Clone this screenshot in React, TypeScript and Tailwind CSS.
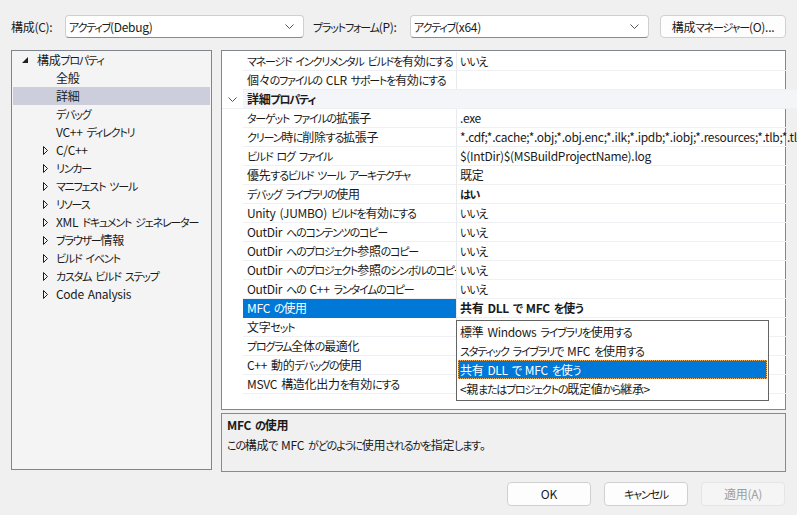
import React from "react";

const FONT = "[font-family:'Noto_Sans_CJK_JP',sans-serif] [font-feature-settings:'palt']";

// kana in the reference UI font are narrower than in Noto, so tighten them
function J({ t }: { t: string }) {
  const parts = t.split(/([\u3040-\u30ff]+| )/).filter((p) => p !== "");
  return (
    <span className="whitespace-nowrap">
      {parts.map((p, i) =>
        p === " " ? (
          <span key={i} className="inline-block w-[4px]">
            {" "}
          </span>
        ) : /[\u3040-\u30ff]/.test(p) ? (
          <span key={i} className="text-[11px] tracking-[-1.2px]">
            {p}
          </span>
        ) : (
          <span key={i} className="tracking-[-0.3px]">
            {p}
          </span>
        )
      )}
    </span>
  );
}

type Row = { name: string; value?: string; bold?: boolean; header?: boolean; selected?: boolean };

const rows: Row[] = [
  { name: "マネージド インクリメンタル ビルドを有効にする", value: "いいえ" },
  { name: "個々のファイルの CLR サポートを有効にする", value: "" },
  { name: "詳細プロパティ", header: true },
  { name: "ターゲット ファイルの拡張子", value: ".exe" },
  { name: "クリーン時に削除する拡張子", value: "*.cdf;*.cache;*.obj;*.obj.enc;*.ilk;*.ipdb;*.iobj;*.resources;*.tlb;*.tli;*.tlh;*.tmp;*.rsp" },
  { name: "ビルド ログ ファイル", value: "$(IntDir)$(MSBuildProjectName).log" },
  { name: "優先するビルド ツール アーキテクチャ", value: "既定" },
  { name: "デバッグ ライブラリの使用", value: "はい", bold: true },
  { name: "Unity (JUMBO) ビルドを有効にする", value: "いいえ" },
  { name: "OutDir へのコンテンツのコピー", value: "いいえ" },
  { name: "OutDir へのプロジェクト参照のコピー", value: "いいえ" },
  { name: "OutDir へのプロジェクト参照のシンボルのコピー", value: "いいえ" },
  { name: "OutDir への C++ ランタイムのコピー", value: "いいえ" },
  { name: "MFC の使用", value: "共有 DLL で MFC を使う", bold: true, selected: true },
  { name: "文字セット", value: "" },
  { name: "プログラム全体の最適化", value: "" },
  { name: "C++ 動的デバッグの使用", value: "" },
  { name: "MSVC 構造化出力を有効にする", value: "" },
];

const treeItems: { label: string; level: 0 | 1; expand?: "open" | "closed"; selected?: boolean }[] = [
  { label: "構成プロパティ", level: 0, expand: "open" },
  { label: "全般", level: 1 },
  { label: "詳細", level: 1, selected: true },
  { label: "デバッグ", level: 1 },
  { label: "VC++ ディレクトリ", level: 1 },
  { label: "C/C++", level: 1, expand: "closed" },
  { label: "リンカー", level: 1, expand: "closed" },
  { label: "マニフェスト ツール", level: 1, expand: "closed" },
  { label: "リソース", level: 1, expand: "closed" },
  { label: "XML ドキュメント ジェネレーター", level: 1, expand: "closed" },
  { label: "ブラウザー情報", level: 1, expand: "closed" },
  { label: "ビルド イベント", level: 1, expand: "closed" },
  { label: "カスタム ビルド ステップ", level: 1, expand: "closed" },
  { label: "Code Analysis", level: 1, expand: "closed" },
];

const dropItems = [
  "標準 Windows ライブラリを使用する",
  "スタティック ライブラリで MFC を使用する",
  "共有 DLL で MFC を使う",
  "<親またはプロジェクトの既定値から継承>",
];

function Chevron() {
  return (
    <svg width="9" height="5" viewBox="0 0 9 5">
      <path d="M0.5 0.5 L4.5 4.5 L8.5 0.5" fill="none" stroke="#555" strokeWidth="1" />
    </svg>
  );
}

function Combo({ text, width }: { text: string; width: string }) {
  return (
    <div className={`${width} h-[23px] bg-white border border-[#cfcfcf] border-b-[#8a8a8a] rounded-[4px] flex items-center pl-[3px] pr-[9px]`}>
      <span className="flex-1">
        <J t={text} />
      </span>
      <Chevron />
    </div>
  );
}

function TreeArrow({ kind }: { kind: "open" | "closed" }) {
  if (kind === "open") {
    return (
      <svg width="6" height="6" viewBox="0 0 6 6">
        <path d="M6 0 L6 6 L0 6 Z" fill="#1e1e1e" />
      </svg>
    );
  }
  return (
    <svg width="5" height="9" viewBox="0 0 5 9">
      <path d="M0.5 0.5 L4.5 4.5 L0.5 8.5 Z" fill="none" stroke="#1e1e1e" strokeWidth="1" />
    </svg>
  );
}

export default function App() {
  return (
    <div className={`w-[797px] h-[515px] bg-[#f0f0f0] overflow-hidden text-[12px] text-[#1a1a1a] ${FONT}`}>
      {/* top bar */}
      <div className="flex items-center h-[23px] mt-[15px] pl-[11px]">
        <span className="w-[54px]">
          <J t="構成(C):" />
        </span>
        <Combo text="アクティブ(Debug)" width="w-[239px]" />
        <span className="w-[97px] ml-[9px]">
          <J t="プラットフォーム(P):" />
        </span>
        <Combo text="アクティブ(x64)" width="w-[239px]" />
        <div className="ml-[11px] w-[126px] h-[23px] bg-[#fdfdfd] border border-[#d0d0d0] rounded-[4px] flex items-center justify-center">
          <J t="構成マネージャー(O)..." />
        </div>
      </div>

      {/* main */}
      <div className="flex mt-[12px] pl-[11px]">
        {/* tree */}
        <div className="w-[201px] h-[420px] bg-[#f4f4f4] border border-[#80848c] px-[1px]">
          {treeItems.map((t) => (
            <div key={t.label} className={`h-[18px] flex items-center ${t.selected ? "bg-[#cccedb]" : ""}`}>
              <div className={`flex items-center justify-center w-[8px] ${t.level === 0 ? "ml-[8px]" : "ml-[28px]"}`}>
                {t.expand && <TreeArrow kind={t.expand} />}
              </div>
              <span className={t.level === 0 ? "ml-[8px]" : "ml-[7px]"}>
                <J t={t.label} />
              </span>
            </div>
          ))}
        </div>

        {/* right column */}
        <div className="ml-[9px] flex flex-col">
          <div className="relative w-[565px] h-[360px] bg-white border border-[#82868e] flex">
            <div className="flex-1 pt-[1px]">
              {rows.map((r) =>
                r.header ? (
                  <div key={r.name} className="h-[19px] flex items-center border-b border-[#eef0f4]">
                    <div className="w-[21px] flex justify-center">
                      <Chevron />
                    </div>
                    <div className="flex-1 h-full bg-[#f3f5f8] flex items-center pl-[4px] font-bold">
                      <J t={r.name} />
                    </div>
                  </div>
                ) : (
                  <div key={r.name} className="h-[19px] flex">
                    <div className="w-[21px]" />
                    <div
                      className={`w-[213px] h-full pl-[4px] flex items-center overflow-hidden border-b ${
                        r.selected ? "bg-[#0078d7] text-white border-[#0078d7]" : "border-[#eef0f4]"
                      }`}
                    >
                      <J t={r.name} />
                    </div>
                    <div
                      className={`flex-1 min-w-0 h-full border-l border-[#e8eaee] pl-[3px] pr-[2px] flex items-center overflow-hidden border-b border-b-[#eef0f4] ${
                        r.bold ? "font-bold" : ""
                      }`}
                    >
                      <span className="flex-1 min-w-0 overflow-hidden">
                        <J t={r.value ?? ""} />
                      </span>
                      {r.selected && (
                        <div className="w-[16px] h-[16px] border border-[#9a9a9a] bg-white flex items-center justify-center">
                          <Chevron />
                        </div>
                      )}
                    </div>
                  </div>
                )
              )}
            </div>
            {/* scrollbar */}
            <div className="w-[15px] bg-[#f0f0f0] flex justify-center pt-[64px]">
              <div className="w-[2px] h-[276px] bg-[#8a8a8a] ml-[1px]" />
            </div>

            {/* dropdown list */}
            <div className="absolute left-[234px] top-[269px] w-[313px] h-[81px] bg-white border border-[#646464] pt-[1px] px-[1px]">
              {dropItems.map((d, i) => (
                <div
                  key={d}
                  className={`h-[19px] flex items-center pl-[2px] ${
                    i === 2 ? "bg-[#0078d7] text-white outline-1 outline-dotted outline-[#f0b060] -outline-offset-1" : ""
                  }`}
                >
                  <J t={d} />
                </div>
              ))}
            </div>
          </div>

          {/* description */}
          <div className="mt-[3px] w-[565px] h-[59px] border border-[#8a8a8a] bg-[#f0f0f0] px-[5px] pt-[2px]">
            <div className="font-bold leading-[18px]">
              <J t="MFC の使用" />
            </div>
            <div className="leading-[18px] mt-[2px]">
              <J t="この構成で MFC がどのように使用されるかを指定します。" />
            </div>
          </div>
        </div>
      </div>

      {/* buttons */}
      <div className="flex justify-end gap-[13px] pr-[12px] mt-[10px]">
        <div className="w-[84px] h-[24px] bg-[#fdfdfd] border border-[#d0d0d0] rounded-[4px] flex items-center justify-center">OK</div>
        <div className="w-[84px] h-[24px] bg-[#fdfdfd] border border-[#d0d0d0] rounded-[4px] flex items-center justify-center">
          <J t="キャンセル" />
        </div>
        <div className="w-[84px] h-[24px] bg-[#f5f5f5] border border-[#e5e5e5] rounded-[4px] flex items-center justify-center text-[#9d9d9d]">
          <J t="適用(A)" />
        </div>
      </div>
    </div>
  );
}
